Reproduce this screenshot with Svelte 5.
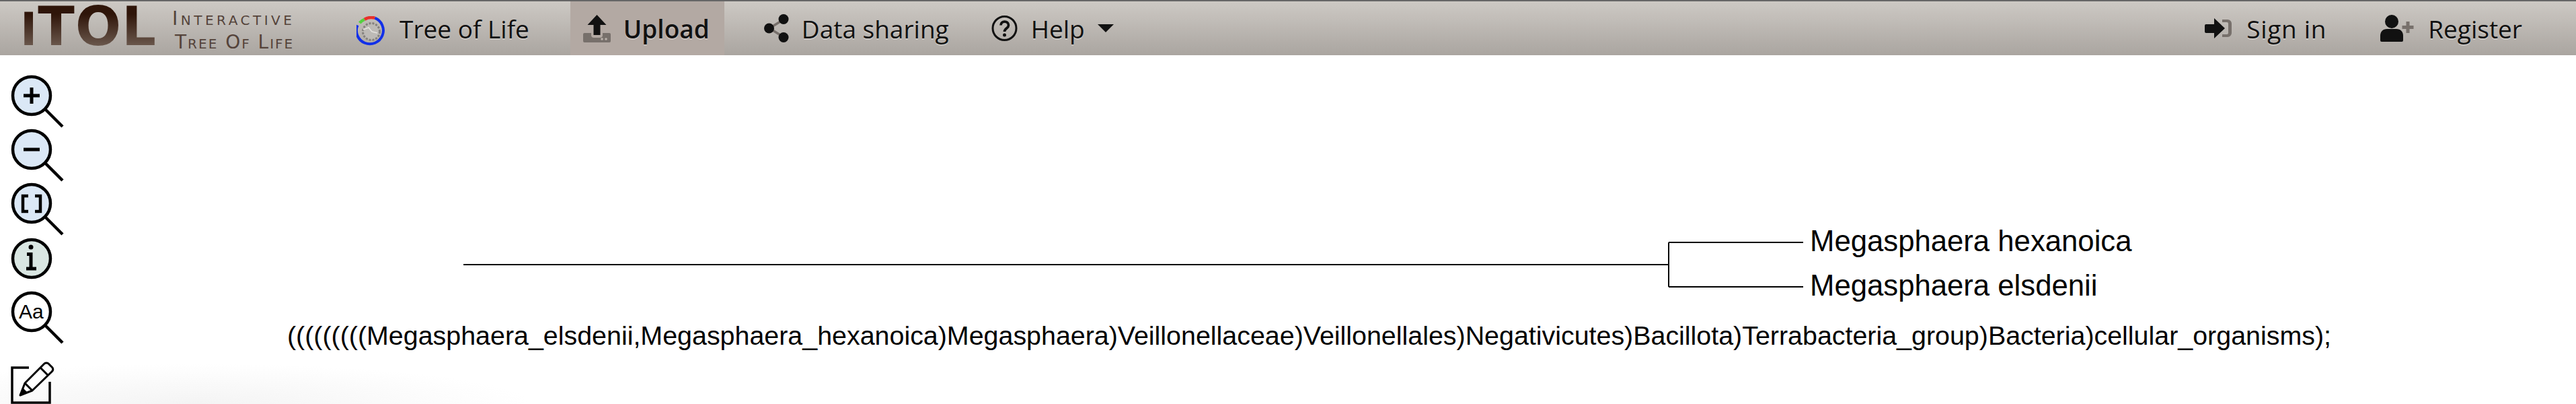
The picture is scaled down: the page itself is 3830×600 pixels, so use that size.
<script lang="ts">
  const newick = '(((((((((Megasphaera_elsdenii,Megasphaera_hexanoica)Megasphaera)Veillonellaceae)Veillonellales)Negativicutes)Bacillota)Terrabacteria_group)Bacteria)cellular_organisms);';
</script>

<nav class="topbar">
  <a class="brand" href="#top">
    <span class="brand-mark"><span class="brand-i">i</span>TOL</span>
    <span class="brand-text"><span class="line-a">Interactive</span><span class="line-b">Tree Of Life</span></span>
  </a>

  <ul class="menu">
    <li class="item tol">
      <svg class="tol-icon" width="44" height="44" viewBox="0 0 44 44">
        <circle cx="22" cy="23" r="12.500" fill="#bdbab6" stroke="#85827e" stroke-width="3" stroke-dasharray="3 2" />
        <path d="M10 20l8-3 5 6 8 2" fill="none" stroke="#e4e2de" stroke-width="1.500" />
        <path d="M1.500 13.500A20 20 0 1 0 27.300 2.700" fill="none" stroke="#1230e8" stroke-width="4" />
        <path d="M4.700 10A20 20 0 0 1 12 4.700" fill="none" stroke="#55d040" stroke-width="4.500" />
        <path d="M12 4.700A20 20 0 0 1 27.300 2.700" fill="none" stroke="#e8302a" stroke-width="4.500" />
      </svg>
      Tree of Life
    </li>
    <li class="item upload active">
      <svg width="41" height="41" viewBox="0 0 41 41">
        <path d="M2 27h10v3a4 4 0 0 0 4 4h9a4 4 0 0 0 4-4v-3h10a2 2 0 0 1 2 2v10a2 2 0 0 1-2 2H2a2 2 0 0 1-2-2V29a2 2 0 0 1 2-2z" fill="#77706b" />
        <circle cx="28" cy="36" r="1.800" fill="#b9b0aa" />
        <circle cx="34" cy="36" r="1.800" fill="#b9b0aa" />
        <path d="M20.500 0l14 15h-9v15h-10V15h-9z" fill="#111" />
      </svg>
      Upload
    </li>
    <li class="item share">
      <svg width="40" height="42" viewBox="0 0 40 42">
        <path d="M29 8L8 21l21 13" fill="none" stroke="#77706b" stroke-width="3.500" />
        <circle cx="29" cy="7.500" r="7.500" fill="#111" />
        <circle cx="7.500" cy="21" r="7.500" fill="#111" />
        <circle cx="29" cy="34.500" r="7.500" fill="#111" />
      </svg>
      Data sharing
    </li>
    <li class="item help">
      <svg width="40" height="40" viewBox="0 0 40 40">
        <circle cx="19.500" cy="20" r="17.500" fill="none" stroke="#111" stroke-width="3" />
        <path d="M14 15.500c0-7.500 11.500-7 11.500 0 0 4.500-6 4.500-6 9.500" fill="none" stroke="#111" stroke-width="3.800" />
        <circle cx="19.500" cy="30" r="2.500" fill="#111" />
      </svg>
      Help
      <span class="caret"></span>
    </li>
  </ul>

  <ul class="menu right">
    <li class="item signin">
      <svg width="40" height="30" viewBox="0 0 40 30">
        <path d="M26 2h8a6 6 0 0 1 6 6v14a6 6 0 0 1-6 6h-8v-4h7a2 2 0 0 0 2-2V8a2 2 0 0 0-2-2h-7z" fill="#77706b" />
        <path d="M14 0l16 15-16 15V22H2a2 2 0 0 1-2-2V11a2 2 0 0 1 2-2h12z" fill="#111" />
      </svg>
      Sign in
    </li>
    <li class="item register">
      <svg width="50" height="40" viewBox="0 0 50 40">
        <circle cx="17" cy="10" r="10" fill="#111" />
        <path d="M0 38V31c0-6 4-10 10-10h14c6 0 10 4 10 10v7a2 2 0 0 1-2 2H2a2 2 0 0 1-2-2z" fill="#111" />
        <path d="M38.500 10h5v6h6v5h-6v6h-5v-6h-6v-5h6z" fill="#77706b" />
      </svg>
      Register
    </li>
  </ul>
</nav>

<main class="workspace">
  <aside class="tools">
    <svg class="tool" viewBox="0 0 80 80" width="80" height="80">
      <circle cx="31" cy="31" r="28" fill="#dbe8f6" stroke="#000" stroke-width="4.500" />
      <path d="M51 51l26 26" stroke="#000" stroke-width="4.500" />
      <path d="M19 31h24M31 19v24" stroke="#000" stroke-width="5" />
    </svg>
    <svg class="tool" viewBox="0 0 80 80" width="80" height="80">
      <circle cx="31" cy="31" r="28" fill="#dbe8f6" stroke="#000" stroke-width="4.500" />
      <path d="M51 51l26 26" stroke="#000" stroke-width="4.500" />
      <path d="M19 31h24" stroke="#000" stroke-width="5" />
    </svg>
    <svg class="tool" viewBox="0 0 80 80" width="80" height="80">
      <circle cx="31" cy="31" r="28" fill="#dbe8f6" stroke="#000" stroke-width="4.500" />
      <path d="M51 51l26 26" stroke="#000" stroke-width="4.500" />
      <path d="M26 20h-8v23h8M36 20h8v23h-8" fill="none" stroke="#000" stroke-width="4.500" />
    </svg>
    <svg class="tool info" viewBox="0 0 62 62" width="62" height="62">
      <circle cx="31" cy="31" r="28" fill="#d9e6e2" stroke="#000" stroke-width="4.500" />
      <circle cx="30" cy="14" r="3.500" fill="#000" />
      <path d="M24 24.500h6v21M23 46h15" fill="none" stroke="#000" stroke-width="5" />
    </svg>
    <div class="tool aa">
      <svg viewBox="0 0 80 80" width="80" height="80">
        <circle cx="31" cy="31" r="28" fill="#fff" stroke="#000" stroke-width="4.500" />
        <path d="M51 51l26 26" stroke="#000" stroke-width="4.500" />
      </svg>
      <span>Aa</span>
    </div>
    <svg class="tool edit" viewBox="0 0 64 64" width="64" height="64">
      <path d="M27 8H2v52h56V29" fill="none" stroke="#000" stroke-width="3.500" />
      <path d="M14 49l7-18L50 2q3-2 6 0l6 6q2 3-1 6L32 42z" fill="#fff" stroke="#000" stroke-width="3" stroke-linejoin="round" />
      <path d="M21 31l11 11M44 8l12 12" stroke="#000" stroke-width="3" />
      <path d="M14 49l4-11 7 7z" fill="#000" />
    </svg>
  </aside>

  <div class="canvas">
    <svg class="tree" width="2700" height="130" viewBox="0 0 2700 130">
      <path d="M0 71H1792M1792 38V104M1792 38H1992M1792 104H1992" fill="none" stroke="#000" stroke-width="2" shape-rendering="crispEdges" />
      <text x="2002" y="51">Megasphaera hexanoica</text>
      <text x="2002" y="117">Megasphaera elsdenii</text>
    </svg>
    <p class="newick">{newick}</p>
  </div>
</main>

<style>
  :global(body) {
    margin: 0;
    background: #fff;
  }

  .topbar {
    display: flex;
    align-items: center;
    height: 80px;
    border-top: 2px solid #666;
    background: linear-gradient(#cdc9c4, #aaa5a0);
    font-family: 'Open Sans', 'Noto Sans', sans-serif;
    font-size: 37px;
    color: #111;
    text-shadow: 0 2px 0 rgba(255, 255, 255, 0.3);
  }

  .brand {
    display: flex;
    align-items: center;
    width: 500px;
    padding-left: 30px;
    box-sizing: border-box;
    text-decoration: none;
    text-shadow: none;
  }

  .brand-mark {
    width: 226px;
    font-family: 'DejaVu Sans', sans-serif;
    font-weight: 700;
    font-size: 80px;
    line-height: 80px;
    letter-spacing: 1px;
    white-space: nowrap;
    background: linear-gradient(#2f1509 25%, #6e5c51 85%);
    -webkit-background-clip: text;
    background-clip: text;
    color: transparent;
  }

  .brand-i {
    font-size: 68px;
    text-transform: uppercase;
  }

  .brand-text {
    display: flex;
    flex-direction: column;
    gap: 7px;
    margin-top: 7px;
    font-family: 'DejaVu Sans', sans-serif;
    font-variant: small-caps;
    font-size: 28px;
    line-height: 28px;
    color: #54433a;
    white-space: nowrap;
  }

  .line-a {
    letter-spacing: 4.500px;
  }

  .line-b {
    margin-left: 4px;
    letter-spacing: 2px;
  }

  .menu {
    display: flex;
    align-items: stretch;
    height: 100%;
    margin: 0;
    padding: 0;
    list-style: none;
  }

  .menu.right {
    margin-left: auto;
    padding-right: 80px;
    gap: 80px;
  }

  .item {
    display: flex;
    align-items: center;
    white-space: nowrap;
  }

  .tol {
    gap: 20px;
    padding: 0 61px 0 30px;
  }

  .tol-icon {
    margin-top: 8px;
  }

  .upload {
    gap: 19px;
    padding: 0 22px 0 19px;
  }

  .active {
    background: #b3a9a3;
    font-weight: 600;
  }

  .share {
    gap: 16px;
    padding: 0 63px 0 59px;
  }

  .help {
    gap: 19px;
  }

  .signin {
    gap: 22px;
    letter-spacing: 0.700px;
  }

  .register {
    gap: 21px;
  }

  .caret {
    width: 0;
    height: 0;
    border-left: 12px solid transparent;
    border-right: 12px solid transparent;
    border-top: 12px solid #111;
  }

  .workspace {
    position: relative;
    height: 518px;
    overflow: hidden;
    background: radial-gradient(ellipse 500px 60px at 290px 100%, #f4f4f4, #fff);
  }

  .tools {
    display: flex;
    flex-direction: column;
    align-items: flex-start;
    padding: 29px 0 0 16px;
  }

  .tool {
    display: block;
  }

  .info {
    margin-top: 2px;
  }

  .aa {
    position: relative;
    height: 80px;
    margin-top: 17px;
  }

  .aa span {
    position: absolute;
    top: 11px;
    left: 12px;
    font-family: 'Liberation Sans', sans-serif;
    font-size: 30px;
    line-height: 40px;
  }

  .edit {
    margin-top: 26px;
    overflow: visible;
  }

  .canvas {
    position: absolute;
    top: 0;
    left: 0;
    width: 100%;
  }

  .tree {
    position: absolute;
    top: 240px;
    left: 689px;
  }

  .tree text {
    font-family: 'Liberation Sans', sans-serif;
    font-size: 43.700px;
  }

  .newick {
    position: absolute;
    top: 394px;
    left: 427px;
    margin: 0;
    font-family: 'Liberation Sans', sans-serif;
    font-size: 39.400px;
    line-height: 44px;
    white-space: nowrap;
  }
</style>
